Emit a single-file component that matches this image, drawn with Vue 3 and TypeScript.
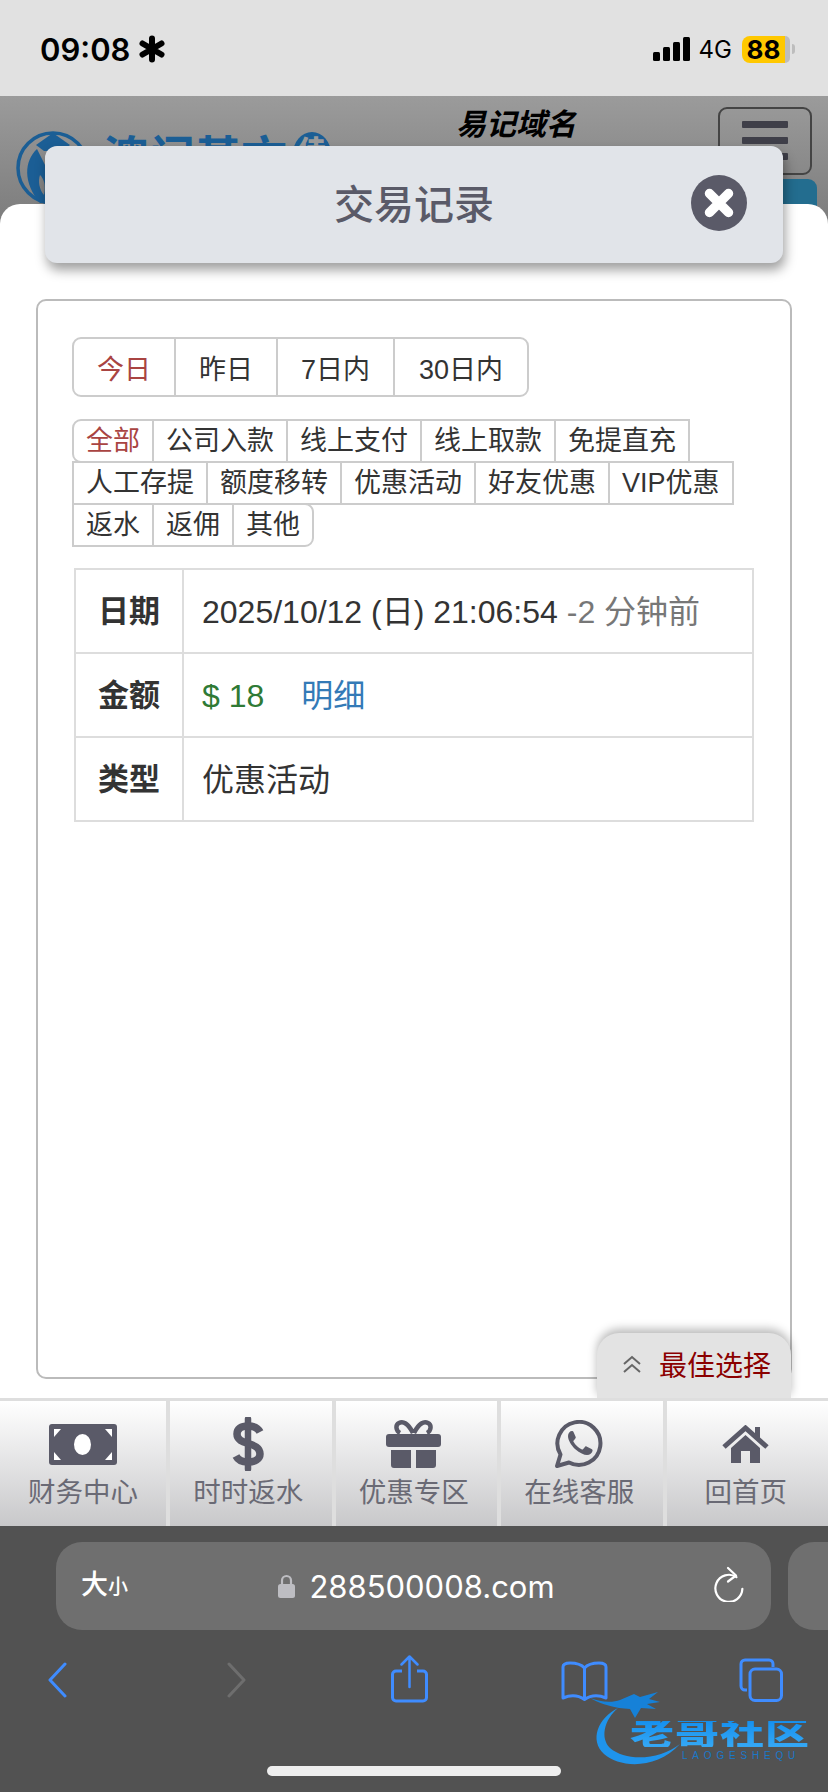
<script setup lang="ts">
const tabs = ['今日', '昨日', '7日内', '30日内']
const filters = ['全部', '公司入款', '线上支付', '线上取款', '免提直充', '人工存提', '额度移转', '优惠活动', '好友优惠', 'VIP优惠', '返水', '返佣', '其他']
const nav = [
  { key: 'money', label: '财务中心' },
  { key: 'dollar', label: '时时返水' },
  { key: 'gift', label: '优惠专区' },
  { key: 'chat', label: '在线客服' },
  { key: 'home', label: '回首页' },
]
</script>

<template>
  <div class="phone">
    <header class="status">
      <div class="clock">
        <span>09:08</span>
        <svg width="26" height="28" viewBox="0 0 26 28"><g stroke="#000" stroke-width="6" stroke-linecap="round"><path d="M13 3.5v21M3.5 8.5l19 11M22.5 8.5l-19 11" /></g></svg>
      </div>
      <div class="indicators">
        <svg width="37" height="24" viewBox="0 0 37 24"><g fill="#000"><rect x="0" y="15" width="7" height="9" rx="1.5" /><rect x="10" y="10" width="7" height="14" rx="1.5" /><rect x="20" y="5" width="7" height="19" rx="1.5" /><rect x="30" y="0" width="7" height="24" rx="1.5" /></g></svg>
        <span class="net">4G</span>
        <div class="battery"><span class="level">88</span><i class="rest"></i><i class="nub"></i></div>
      </div>
    </header>

    <main class="page">
      <div class="site-header">
        <svg class="logo-mark" width="74" height="90" viewBox="0 0 74 90">
          <circle cx="37" cy="43" r="35" fill="none" stroke="#1b5e95" stroke-width="3.5" />
          <path d="M37 8l17 12-8 6H28l-8-6z" fill="#1b5e95" />
          <path fill-rule="evenodd" d="M21 24C8 36 7 58 24 78h6C44 62 46 42 38 26c-3 8-6 12-8 16-3-6-6-12-9-18zM24 50c4 4 6 10 4 20-5-6-6-14-4-20z" fill="#1b5e95" />
        </svg>
        <div class="logo-text"><span>澳门基文</span><b>佳</b></div>
        <div class="site-title">易记域名</div>
        <div class="site-actions">
          <div class="burger"><i></i><i></i><i></i></div>
          <div class="blue-tab"></div>
        </div>
      </div>

      <section class="modal">
        <div class="title-card">
          <h1>交易记录</h1>
          <svg class="close" width="56" height="56" viewBox="0 0 56 56">
            <circle cx="28" cy="28" r="28" fill="#5a5a68" />
            <path d="M18.5 18.5l19 19M37.5 18.5l-19 19" stroke="#fff" stroke-width="9.5" stroke-linecap="round" />
          </svg>
        </div>

        <div class="panel">
          <div class="tabs">
            <button v-for="(t, i) in tabs" :key="t" class="tab" :class="{ active: i === 0 }">{{ t }}</button>
          </div>
          <div class="filters">
            <button v-for="(f, i) in filters" :key="f" class="filter" :class="{ active: i === 0, last: i === filters.length - 1 }">{{ f }}</button>
          </div>
          <table class="record">
            <tbody>
              <tr><th>日期</th><td>2025/10/12 (日) 21:06:54 <span class="ago">-2 分钟前</span></td></tr>
              <tr><th>金额</th><td><span class="amount">$ 18</span><a class="detail">明细</a></td></tr>
              <tr><th>类型</th><td>优惠活动</td></tr>
            </tbody>
          </table>
        </div>
      </section>

      <nav class="bottom-nav">
        <div v-for="n in nav" :key="n.key" class="nav-item">
          <div class="nav-icon">
            <svg v-if="n.key === 'money'" width="68" height="41" viewBox="0 0 68 41">
              <rect width="68" height="41" rx="3" fill="#5a5a68" />
              <ellipse cx="33.5" cy="20.5" rx="8.5" ry="10.5" fill="#fff" />
              <path d="M5 5h7l-7 8zM63 5h-7l7 8zM5 36h7l-7-8zM63 36h-7l7-8z" fill="#fff" />
            </svg>
            <svg v-else-if="n.key === 'dollar'" width="32" height="54" viewBox="0 0 32 54">
              <path d="M16 2v50" stroke="#5a5a68" stroke-width="6.5" stroke-linecap="round" />
              <path d="M28 15c-2-4-6-6-12-6-7 0-11 3-11 8 0 12 23 7 23 20 0 5-5 8-12 8-6 0-10-2-12-6" fill="none" stroke="#5a5a68" stroke-width="7.5" />
            </svg>
            <svg v-else-if="n.key === 'gift'" width="55" height="48" viewBox="0 0 55 48">
              <path d="M27 13C22 3 17 1 13 3c-4 2-3 8 1 10M28 13c5-10 10-12 14-10 4 2 3 8-1 10" fill="none" stroke="#5a5a68" stroke-width="4.5" />
              <rect y="14" width="55" height="13" rx="3" fill="#5a5a68" />
              <path d="M5 30h20v18H8a3 3 0 0 1-3-3zM30 30h20v15a3 3 0 0 1-3 3H30z" fill="#5a5a68" />
            </svg>
            <svg v-else-if="n.key === 'chat'" width="48" height="48" viewBox="0 0 48 48">
              <path d="M2 46l3.500-11.500A21.500 21.500 0 1 1 14 42.500z" fill="none" stroke="#5a5a68" stroke-width="4" stroke-linejoin="round" />
              <path d="M17 11c-2 0-4 2-4 5 0 4 3 9 7 13 5 4 9 6 12 6 3 0 5-2 5.500-4 .2-1 0-1.500-1-2l-5-2.500c-.8-.4-1.300 0-2 1l-1.500 1.800c-.4.400-.8.400-1.500 0-3-1.300-6-4-8-7.500-.3-.6 0-1 .5-1.500l1.500-2c.4-.5.4-1 .1-1.500L18.500 12c-.4-.8-.8-1-1.500-1z" fill="#5a5a68" />
            </svg>
            <svg v-else width="47" height="38" viewBox="0 0 47 38">
              <path d="M33 2h5v12h-5z" fill="#5a5a68" />
              <path d="M2 22L23.500 3 45 22" fill="none" stroke="#5a5a68" stroke-width="5" />
              <path d="M9 23L23.500 10 38 23v15H28V26h-9v12H9z" fill="#5a5a68" />
            </svg>
          </div>
          <span class="nav-label">{{ n.label }}</span>
        </div>
      </nav>

      <div class="best">
        <svg width="20" height="18" viewBox="0 0 20 18"><path d="M2 9l8-7 8 7M2 17l8-7 8 7" fill="none" stroke="#666" stroke-width="2" /></svg>
        <span>最佳选择</span>
      </div>
    </main>

    <footer class="safari">
      <div class="pill-row">
        <div class="address">
          <span class="aa">大<small>小</small></span>
          <div class="url">
            <svg width="17" height="24" viewBox="0 0 17 24">
              <path d="M4 11V6.500a4.500 4.500 0 0 1 9 0V11" fill="none" stroke="#bdbdc2" stroke-width="2.200" />
              <rect y="10" width="17" height="14" rx="2.500" fill="#bdbdc2" />
            </svg>
            <span>288500008.com</span>
          </div>
          <svg class="reload" width="30" height="36" viewBox="0 0 30 36">
            <path d="M21 10.200A13.500 13.500 0 1 0 28.500 21" fill="none" stroke="#fff" stroke-width="2.200" stroke-linecap="round" transform="rotate(8 15 21)" />
            <path d="M14 2l8 7.500-8 6" fill="none" stroke="#fff" stroke-width="2.200" stroke-linecap="round" stroke-linejoin="round" />
          </svg>
        </div>
        <div class="next-pill"></div>
      </div>
      <div class="tools">
        <svg class="t-back" width="20" height="36" viewBox="0 0 20 36"><path d="M18 2L3 18l15 16" fill="none" stroke="#3f8cff" stroke-width="3" stroke-linecap="round" stroke-linejoin="round" /></svg>
        <svg class="t-fwd" width="20" height="36" viewBox="0 0 20 36"><path d="M2 2l15 16L2 34" fill="none" stroke="#6e6e6e" stroke-width="3" stroke-linecap="round" stroke-linejoin="round" /></svg>
        <svg class="t-share" width="37" height="48" viewBox="0 0 37 48">
          <path d="M11 16H5a3.500 3.500 0 0 0-3.500 3.500v23A3.500 3.500 0 0 0 5 46h27a3.500 3.500 0 0 0 3.500-3.500v-23A3.500 3.500 0 0 0 32 16h-6" fill="none" stroke="#3f8cff" stroke-width="3" />
          <path d="M18.500 32V2M10.500 9.500l8-8 8 8" fill="none" stroke="#3f8cff" stroke-width="2.500" stroke-linecap="round" stroke-linejoin="round" />
        </svg>
        <svg class="t-book" width="47" height="40" viewBox="0 0 47 40">
          <path d="M23.500 7C20 3 15 2 9 2 5 2 2 3.500 2 6v31c7-3 15-3 21.500 1.500C30 34 38 34 45 37V6c0-2.500-3-4-7-4-6 0-11 1-14.500 5zM23.500 7v31" fill="none" stroke="#3f8cff" stroke-width="3" stroke-linejoin="round" />
        </svg>
        <svg class="t-tabs" width="44" height="44" viewBox="0 0 44 44">
          <path d="M8 32H6a4 4 0 0 1-4-4V6a4 4 0 0 1 4-4h24a4 4 0 0 1 4 4v3" fill="none" stroke="#3f8cff" stroke-width="3" />
          <rect x="11" y="11" width="31.500" height="31.500" rx="5" fill="none" stroke="#3f8cff" stroke-width="3" />
        </svg>
      </div>
      <div class="home-bar"></div>

      <div class="watermark">
        <svg class="swirl" width="90" height="72" viewBox="0 0 90 72">
          <path d="M26 10C6 20-3 42 12 56c16 14 52 16 76-10-20 16-54 18-70 4C8 40 12 22 26 10z" fill="#1f94ec" />
          <path d="M-2 0c10 4 22 5 30 2l14-6 6 3 18-5-9 7 11 3-13 2 9 5-15-1-6 10-5-9-11-1C18 8 8 6-2 0z" fill="#1681d8" />
        </svg>
        <div class="wm-text">老哥社区</div>
        <div class="wm-sub">LAOGESHEQU</div>
      </div>
    </footer>
  </div>
</template>

<style>
html, body { margin: 0; background: #525252; }
</style>

<style scoped>
.phone {
  width: 828px;
  height: 1792px;
  display: flex;
  flex-direction: column;
  overflow: hidden;
  font-family: "Liberation Sans", "Noto Sans CJK SC", sans-serif;
  color: #333;
}
.status {
  height: 96px;
  flex: none;
  background: #e1e1e1;
  display: flex;
  justify-content: space-between;
  align-items: center;
  padding: 2px 33px 0 40px;
  box-sizing: border-box;
  font-family: Inter, "Liberation Sans", sans-serif;
  color: #000;
}
.clock { display: flex; align-items: center; gap: 9px; font-size: 31px; font-weight: 600; }
.indicators { display: flex; align-items: center; }
.net { font-size: 24px; margin-left: 9px; }
.battery { position: relative; display: flex; margin-left: 10px; height: 27px; }
.level {
  width: 43px;
  background: #ffc800;
  border-radius: 8px 0 0 8px;
  font-size: 26px;
  font-weight: 700;
  line-height: 27px;
  text-align: center;
}
.rest { width: 5px; background: #bdbdbd; border-radius: 0 6px 6px 0; }
.nub { width: 3px; height: 10px; margin: 8px 0 0 2px; background: #bdbdbd; border-radius: 0 3px 3px 0; }

.page { position: relative; flex: none; height: 1430px; display: flex; flex-direction: column; background: #fff; }
.site-header {
  height: 128px;
  flex: none;
  display: flex;
  align-items: flex-start;
  background: linear-gradient(#9b9b9b, #7c7c7c);
  overflow: hidden;
}
.logo-mark { margin: 29px 0 0 16px; flex: none; }
.logo-text {
  display: flex;
  align-items: flex-start;
  width: 242px;
  margin: 32px 0 0 13px;
  font-size: 46px;
  line-height: 60px;
  font-weight: 700;
  color: #1b5e95;
  white-space: nowrap;
  flex: none;
}
.logo-text b { margin: 4px 0 0 6px; width: 38px; height: 44px; border-radius: 50%; background: #1b5e95; color: #9a9a9a; font-size: 28px; line-height: 40px; text-align: center; }
.site-title { margin: 12px 0 0 111px; font-size: 30px; font-weight: 700; font-style: italic; line-height: 34px; color: #000; }
.site-actions { margin: 11px 11px 0 auto; width: 99px; flex: none; display: flex; flex-direction: column; align-items: flex-start; }
.burger {
  width: 94px;
  height: 68px;
  box-sizing: border-box;
  border: 2px solid #444;
  border-radius: 9px;
  padding: 12px 22px;
  display: flex;
  flex-direction: column;
  gap: 9px;
}
.burger i { display: block; height: 7px; background: #3f3f49; border-radius: 1px; }
.blue-tab { width: 38px; height: 60px; margin: 4px 0 0 61px; background: #236d8f; border-radius: 0 9px 0 0; }

.modal {
  position: relative;
  margin-top: -20px;
  flex: none;
  height: 1194px;
  box-sizing: border-box;
  background: #fff;
  border-radius: 20px 20px 0 0;
  padding: 0 36px 0 36px;
}
.title-card {
  position: relative;
  margin: -58px 9px 0 9px;
  height: 117px;
  background: #e1e4e9;
  border-radius: 12px;
  box-shadow: 2px 7px 12px rgba(0, 0, 0, 0.38);
  display: flex;
  align-items: center;
  justify-content: center;
}
.title-card h1 { margin: -6px 0 0; font-size: 40px; font-weight: 500; color: #5a5a68; }
.close { position: absolute; right: 36px; top: 29px; }
.panel {
  margin-top: 36px;
  height: 1080px;
  box-sizing: border-box;
  border: 2px solid #bbb;
  border-radius: 10px;
  padding: 36px 34px;
}
.tabs { display: flex; }
.tab, .filter {
  appearance: none;
  background: #fff;
  border: 2px solid #ccc;
  font: inherit;
  color: #333;
  margin: 0 0 0 -2px;
  cursor: pointer;
}
.tab { height: 60px; padding: 0 23px; font-size: 27px; }
.tab:first-child { margin-left: 0; border-radius: 9px 0 0 9px; }
.tab:last-child { padding: 0 24px; border-radius: 0 9px 9px 0; }
.tab.active, .filter.active { color: #a94442; }
.filters { display: flex; flex-wrap: wrap; margin-top: 22px; }
.filter { height: 44px; padding: 0 12px; font-size: 27px; line-height: 40px; margin-bottom: -2px; }
.filter:first-child { margin-left: 0; }
.filter:nth-child(6), .filter:nth-child(11) { margin-left: 0; }
.filter.active { border-radius: 9px 0 0 9px; }
.filter.last { border-radius: 0 9px 9px 0; }
.record {
  width: 680px;
  margin: 23px 0 0 2px;
  border-collapse: collapse;
  table-layout: fixed;
  border: 2px solid #ddd;
}
.record th, .record td { height: 82px; border: 2px solid #ddd; padding: 0 0 5px; box-sizing: border-box; }
.record tr { height: 84px; }
.record th { width: 108px; font-size: 31px; font-weight: 700; text-align: center; }
.record td { padding-left: 18px; font-size: 32px; white-space: nowrap; }
.ago { color: #777; }
.amount { color: #2f7a35; }
.detail { color: #337ab7; margin-left: 37px; }

.bottom-nav {
  position: relative;
  flex: none;
  height: 128px;
  box-sizing: border-box;
  border-top: 3px solid #dedede;
  display: flex;
  background: #dedede;
  gap: 4px;
}
.nav-item {
  width: 161.500px;
  flex: none;
  box-sizing: border-box;
  display: flex;
  flex-direction: column;
  align-items: center;
  background: linear-gradient(#fff, #c8c8ca);
  padding: 15px 5px 0 0;
}
.nav-item:first-child { width: 166px; padding-right: 0; }
.nav-item:last-child { flex: 1; padding-right: 3px; }
.nav-icon { height: 56px; display: flex; align-items: center; justify-content: center; }
.nav-label { margin-top: 2px; font-size: 27.500px; line-height: 38px; color: #6a6a75; white-space: nowrap; }
.best {
  position: absolute;
  right: 37px;
  bottom: 128px;
  width: 194px;
  height: 65px;
  box-sizing: border-box;
  padding: 0 0 3px 25px;
  display: flex;
  align-items: center;
  gap: 17px;
  background: #e3e3e3;
  border-radius: 22px 22px 0 0;
  box-shadow: 0 -4px 10px rgba(0, 0, 0, 0.28);
  clip-path: inset(-16px -16px 0 -16px);
  font-size: 28px;
  color: #8b0000;
}

.safari { position: relative; flex: 1; background: #525252; padding-top: 16px; box-sizing: border-box; }
.pill-row { display: flex; gap: 17px; margin-left: 56px; }
.address {
  width: 715px;
  height: 88px;
  flex: none;
  box-sizing: border-box;
  background: #6f6f6f;
  border-radius: 26px;
  position: relative;
  display: flex;
  align-items: center;
  justify-content: center;
  color: #fff;
}
.aa { position: absolute; left: 25px; top: 26px; font-size: 27px; line-height: 34px; font-weight: 500; }
.aa small { font-size: 20px; }
.url { display: flex; align-items: center; gap: 14px; margin-left: 6px; font-family: Inter, "Liberation Sans", sans-serif; font-size: 31px; }
.reload { position: absolute; right: 27px; top: 24px; }
.next-pill { width: 80px; height: 88px; flex: none; background: #6f6f6f; border-radius: 26px 0 0 26px; }
.tools { display: flex; align-items: flex-start; margin-top: 25px; height: 50px; }
.t-back { margin: 7px 0 0 47px; }
.t-fwd { margin: 7px 0 0 160px; }
.t-share { margin: 0 0 0 144px; }
.t-book { margin: 6px 0 0 133px; }
.t-tabs { margin: 3px 0 0 131px; }
.home-bar { width: 294px; height: 10px; margin: 61px auto 0; background: #eee; border-radius: 5px; }
.watermark { position: absolute; left: 592px; top: 172px; width: 230px; height: 90px; }
.swirl { position: absolute; left: 0; top: 0; overflow: visible; }
.wm-text {
  position: absolute;
  left: 38px;
  top: 18px;
  width: 180px;
  font-size: 44px;
  line-height: 36px;
  font-weight: 900;
  letter-spacing: 1px;
  white-space: nowrap;
  transform: scaleY(0.72);
  background: linear-gradient(#1590ef, #35a8f5);
  -webkit-background-clip: text;
  background-clip: text;
  color: transparent;
}
.wm-sub {
  position: absolute;
  left: 90px;
  top: 52px;
  font-size: 10px;
  letter-spacing: 4.800px;
  color: #1a78c8;
  white-space: nowrap;
}
</style>
